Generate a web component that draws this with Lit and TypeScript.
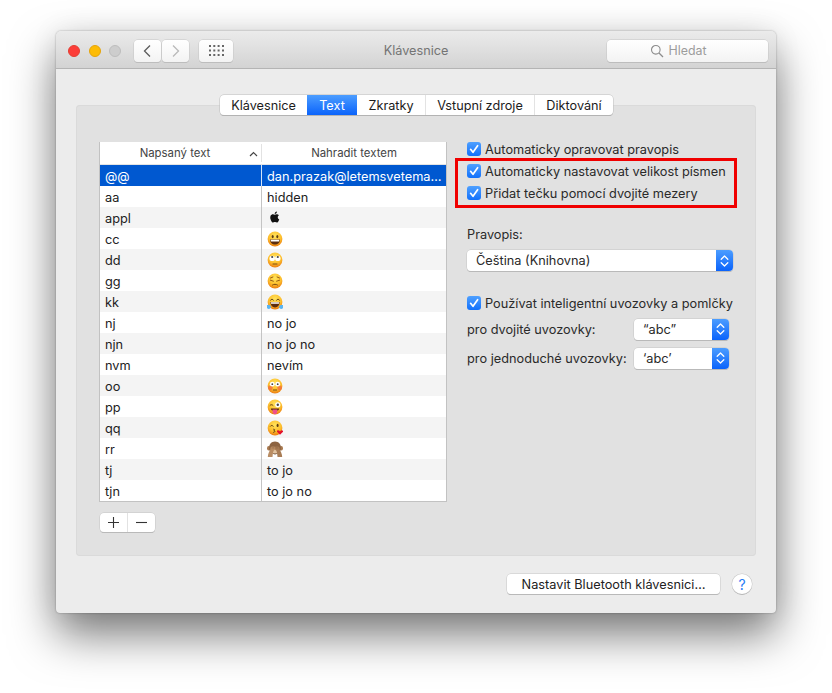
import { LitElement, html, css, svg } from "lit";
import { customElement } from "lit/decorators.js";

const APPLE = "M12.152 6.896c-.948 0-2.415-1.078-3.96-1.04-2.04.027-3.91 1.183-4.961 3.014-2.117 3.675-.546 9.103 1.519 12.09 1.013 1.454 2.208 3.09 3.792 3.039 1.52-.065 2.09-.987 3.935-.987 1.831 0 2.35.987 3.96.948 1.637-.026 2.676-1.48 3.676-2.948 1.156-1.688 1.636-3.325 1.662-3.415-.039-.013-3.182-1.221-3.22-4.857-.026-3.04 2.48-4.494 2.597-4.559-1.429-2.09-3.623-2.324-4.39-2.376-2-.156-3.675 1.09-4.61 1.09zM15.53 3.83c.843-1.012 1.4-2.427 1.245-3.83-1.207.052-2.662.805-3.532 1.818-.78.896-1.454 2.338-1.273 3.714 1.338.104 2.715-.688 3.559-1.701";

const head = (id: string) => svg`
  <defs><radialGradient id=${id} cx="50%" cy="30%" r="72%">
    <stop offset="0" stop-color="#ffe45c"/><stop offset=".6" stop-color="#fdbe2c"/><stop offset="1" stop-color="#e9780f"/>
  </radialGradient></defs>
  <circle cx="8" cy="8" r="7.4" fill="url(#${id})"/>`;

const faces: Record<string, unknown> = {
  apple: svg`<path transform="translate(2.2 1.5) scale(.46)" d=${APPLE} fill="#111"/>`,
  smile: svg`${head("a")}<ellipse cx="5.7" cy="5.6" rx="1" ry="1.6" fill="#5b3a12"/><ellipse cx="10.3" cy="5.6" rx="1" ry="1.6" fill="#5b3a12"/><path d="M3 8.6h10c0 3-2.2 5-5 5s-5-2-5-5z" fill="#5b2c0e"/><path d="M3.6 8.8h8.8l-.4 1.8H4z" fill="#fff"/>`,
  eyes: svg`${head("b")}<circle cx="5.2" cy="6.4" r="2.7" fill="#fff"/><circle cx="10.8" cy="6.4" r="2.7" fill="#fff"/><circle cx="5.2" cy="5" r="1.1" fill="#444"/><circle cx="10.8" cy="5" r="1.1" fill="#444"/><path d="M6 12h4" stroke="#7a4a14" stroke-width="1" stroke-linecap="round"/>`,
  sad: svg`${head("c")}<path d="M3.4 7.200l3 1M12.600 7.200l-3 1M3.500 5l2.400-1M12.500 5l-2.400-1" stroke="#8a5012" stroke-width=".9" fill="none" stroke-linecap="round"/><path d="M5.500 12c1.500-1 3.500-1 5 0" stroke="#7a4a14" stroke-width="1" fill="none" stroke-linecap="round"/>`,
  joy: svg`${head("d")}<path d="M3.600 6.200c.8-1.400 2-1.400 2.800 0M9.600 6.200c.8-1.400 2-1.400 2.800 0" stroke="#5b3a12" stroke-width="1" fill="none" stroke-linecap="round"/><path d="M3.400 8h9.200c0 3.200-2 5.400-4.600 5.400S3.400 11.200 3.400 8z" fill="#5b2c0e"/><path d="M3.800 8.200h8.400l-.3 1.600H4.100z" fill="#fff"/><path d="M-.2 11.200c1.400-.6 3.400-.2 4 1.200.5 1.300-.4 2.500-2 2.500S-.9 13.300-.2 11.200zM16.200 11.200c-1.400-.6-3.400-.2-4 1.200-.5 1.300.4 2.500 2 2.500s2.700-1.600 2-3.700z" fill="#58b4f2"/>`,
  flush: svg`${head("e")}<circle cx="3.400" cy="9.800" r="2.400" fill="#f2693f" opacity=".75"/><circle cx="12.600" cy="9.800" r="2.400" fill="#f2693f" opacity=".75"/><circle cx="5.300" cy="6.200" r="2.400" fill="#fff"/><circle cx="10.700" cy="6.200" r="2.400" fill="#fff"/><circle cx="5.300" cy="6.200" r=".9" fill="#444"/><circle cx="10.700" cy="6.200" r=".9" fill="#444"/><path d="M6.400 12h3.200" stroke="#7a4a14" stroke-width="1" stroke-linecap="round"/>`,
  tongue: svg`${head("f")}<path d="M3 6.400c.8-1 2-1 3 0" stroke="#5b3a12" stroke-width="1" fill="none" stroke-linecap="round"/><circle cx="10.800" cy="5.800" r="2.600" fill="#fff"/><circle cx="10.800" cy="5.800" r="1.200" fill="#444"/><path d="M3.800 9.400h8.400c0 1.200-1 2-2 2.200H5.800c-1-.2-2-1-2-2.200z" fill="#5b2c0e"/><path d="M5.600 10.600h4.600v2.400c0 1.200-1 2.200-2.300 2.200s-2.300-1-2.300-2.200z" fill="#ef4f8a"/>`,
  kiss: svg`${head("g")}<path d="M3.400 6.200c.7-1 1.900-1 2.800 0" stroke="#5b3a12" stroke-width="1" fill="none" stroke-linecap="round"/><ellipse cx="10.600" cy="5.400" rx="1" ry="1.600" fill="#5b3a12"/><path d="M6.600 9.200c1.600 0 1.600 1.300.2 1.500 1.500.2 1.400 1.600-.2 1.700" stroke="#5b3a12" stroke-width=".9" fill="none" stroke-linecap="round"/><path d="M13 14.800l-2.800-2.700c-1-1.300.9-2.800 2.200-1.300l.6.600.6-.6c1.300-1.500 3.200 0 2.200 1.300z" fill="#e3112a"/>`,
  monkey: svg`<ellipse cx="1.700" cy="7.200" rx="1.700" ry="2.300" fill="#a8794f"/><ellipse cx="14.300" cy="7.200" rx="1.700" ry="2.300" fill="#a8794f"/><path d="M8 .6c3.700 0 5.900 2.800 5.900 6.200 0 4.200-2.500 6.400-5.900 6.400S2.100 11 2.100 6.800C2.100 3.400 4.300.6 8 .6z" fill="#8d6442"/><ellipse cx="8" cy="10.400" rx="3.600" ry="2.600" fill="#e2c3a0"/><path d="M3.400 7.200c0-1 1-1.600 2.200-1.600h1.500c.7 0 1 .6 1 1.200v1.100c-.1.900-.8 1-1.300 1.600-.5.700-.9 2.500-1.100 4.500l-.2 1.900H.8c.1-3 1.500-5.600 2.600-7.700z" fill="#b98d64"/><path d="M12.600 7.200c0-1-1-1.600-2.200-1.600H8.900c-.7 0-1 .6-1 1.200v1.100c.1.900.8 1 1.300 1.600.5.700.9 2.500 1.100 4.500l.2 1.900h4.700c-.1-3-1.500-5.600-2.600-7.700z" fill="#a87c55"/><path d="M6.200 12.500c1.200.5 2.400.5 3.600 0" stroke="#5a3a22" stroke-width=".7" fill="none"/><path d="M5.200 5.700v2M6.700 5.700v2M9.300 5.700v2M10.800 5.700v2" stroke="#8a6240" stroke-width=".5"/>`,
};

const rows: [string, string, string?][] = [
  ["@@", "dan.prazak@letemsvetema…"],
  ["aa", "hidden"],
  ["appl", "", "apple"],
  ["cc", "", "smile"],
  ["dd", "", "eyes"],
  ["gg", "", "sad"],
  ["kk", "", "joy"],
  ["nj", "no jo"],
  ["njn", "no jo no"],
  ["nvm", "nevím"],
  ["oo", "", "flush"],
  ["pp", "", "tongue"],
  ["qq", "", "kiss"],
  ["rr", "", "monkey"],
  ["tj", "to jo"],
  ["tjn", "to jo no"],
];

const check = html`<span class="cb"><svg width="14" height="14" viewBox="0 0 14 14"><path d="M3.600 7.300l2.400 3 4.600-6.600" fill="none" stroke="#fff" stroke-width="1.700" stroke-linecap="round" stroke-linejoin="round"/></svg></span>`;

const stepper = html`<span class="step"><svg width="9" height="14" viewBox="0 0 9 14"><path d="M1.200 5.200L4.500 2l3.300 3.200M1.200 8.800L4.500 12l3.300-3.200" fill="none" stroke="#fff" stroke-width="1.300" stroke-linecap="round" stroke-linejoin="round"/></svg></span>`;

@customElement("app-root")
export class AppRoot extends LitElement {
  static styles = css`
    :host { display: block; width: 832px; height: 693px; overflow: hidden; background: #fff; box-sizing: border-box; padding: 31px 56px 0; font-family: Inter, "Liberation Sans", sans-serif; font-size: 12.75px; color: #2a2a2a; }
    * { box-sizing: border-box; }
    .win { width: 720px; height: 582px; border-radius: 5px 5px 4px 4px; background: #ececec; box-shadow: 0 0 2px rgba(0,0,0,.35), 0 22px 45px rgba(0,0,0,.52), 0 0 30px rgba(0,0,0,.07); display: flex; flex-direction: column; }
    .bar { height: 38px; flex: none; border-radius: 5px 5px 0 0; background: linear-gradient(#ebebeb, #d3d3d3); border-bottom: 1px solid #b4b4b4; display: flex; align-items: center; padding: 2px 8px 0 12px; }
    .light { width: 12px; height: 12px; border-radius: 50%; margin-right: 8.5px; flex: none; }
    .red { background: #fc3d39; border: 1px solid #e33e32; }
    .yel { background: #fdbc06; border: 1px solid #e5a40b; }
    .gry { background: #cdcdcd; border: 1px solid #bdbdbd; margin-right: 13px; }
    .tb { height: 22px; background: linear-gradient(#fff, #f3f3f3); border-radius: 4px; box-shadow: 0 0 0 .5px #c6c6c6, 0 1px 0 #b5b5b5; display: flex; align-items: center; justify-content: center; flex: none; }
    .nav { width: 27px; margin-right: 1px; }
    .grid { width: 34px; margin-left: 9px; }
    .title { flex: 1; text-align: center; color: #747474; font-size: 12.7px; padding-right: 8px; }
    .search { width: 161px; gap: 4px; color: #9c9c9c; font-size: 12.4px; padding-right: 18px; }
    .body { flex: 1; display: flex; flex-direction: column; padding: 26px 20px 0; }
    .tabs { display: grid; grid-template-columns: 87px 50px 68px 109px 79px; width: 393px; height: 20px; margin: 0 0 -10px 144px; position: relative; background: #fff; border-radius: 4px; box-shadow: 0 0 0 .5px #bdbdbd, 0 1px 0 #a9a9a9; font-size: 12.7px; color: #1c1c1c; overflow: hidden; }
    .tabs span { display: flex; align-items: center; justify-content: center; border-left: 1px solid #e3e3e3; }
    .tabs span:first-child { border-left: 0; }
    .tabs .on { background: linear-gradient(#4c9dff, #0a63fb); color: #fff; border-left: 0; }
    .tabs .on + span { border-left: 0; }
    .panel { height: 451px; flex: none; background: #e1e1e1; border-radius: 4px; box-shadow: inset 0 0 0 1px #dadada; padding: 37px 20px 0 23px; display: flex; gap: 20px; }
    .left { width: 348px; flex: none; }
    .table { width: 348px; border: 1px solid #c2c2c2; border-top: 0; background: #fff; }
    .hdr { height: 23px; display: grid; grid-template-columns: 162px 1fr; font-size: 11.4px; color: #444; border-bottom: 1px solid #e4e4e4; }
    .hdr span { display: flex; align-items: center; justify-content: center; position: relative; border-right: 1px solid #e2e2e2; margin: 2px 0; }
    .hdr span:first-child { padding-right: 11px; }
    .hdr span:last-child { border-right: 0; }
    .sort { position: absolute; right: 3px; top: 7px; }
    .row { height: 21px; display: grid; grid-template-columns: 162px 1fr; align-items: stretch; color: #222; }
    .row:nth-child(odd) { background: #f4f4f4; }
    .row:nth-child(even) { background: #fff; }
    .row > span { display: flex; align-items: center; padding: 1px 0 0 5px; }
    .row > span:first-child { border-right: 1px solid #c4c4c4; }
    .row.sel { background: #0058d0; color: #fff; }
    .row.sel > span:first-child { border-right-color: #d5e4f7; }
    .pm { width: 55px; height: 19px; margin: 11px 0 0 1px; display: grid; grid-template-columns: 1fr 1fr; background: #fff; border-radius: 4px; box-shadow: 0 0 0 .5px #c6c6c6, 0 1px 0 #adadad; }
    .pm span { display: flex; align-items: center; justify-content: center; }
    .pm span:first-child { border-right: 1px solid #e2e2e2; }
    .right { width: 266px; flex: none; display: flex; flex-direction: column; padding-top: 33px; margin-top: -37px; }
    .chk { height: 22px; display: flex; align-items: center; gap: 4px; white-space: nowrap; flex: none; }
    .cb { width: 14px; height: 14px; border-radius: 3px; background: linear-gradient(#4fa0ff, #1170fb); display: block; flex: none; }
    .cb svg { display: block; }
    .mark { width: 282px; height: 50px; margin: -2px 0 0 -12px; border: 3px solid #f00000; padding: 0 0 0 9px; display: flex; flex-direction: column; }
    .mark .chk:first-child { margin-top: -1px; }
    .lbl { margin-top: 15px; height: 22px; display: flex; align-items: center; }
    .sel-box { height: 21px; background: #fff; border-radius: 4px; box-shadow: 0 0 0 .5px #c6c6c6, 0 1px 0 #adadad; display: flex; align-items: center; justify-content: space-between; padding-left: 9px; overflow: hidden; }
    .step { width: 17px; align-self: stretch; background: linear-gradient(#4c9dff, #0a63fb); display: flex; align-items: center; justify-content: center; }
    .wide { margin-top: 5px; }
    .chk.gap { margin-top: 21px; }
    .q { display: grid; grid-template-columns: 167px 95px; align-items: center; height: 22px; margin-top: 4px; }
    .q + .q { margin-top: 7px; }
    .foot { display: flex; justify-content: flex-end; align-items: center; margin-top: 18px; padding-right: 4px; gap: 12px; }
    .btn { width: 213px; height: 20px; background: #fff; border-radius: 4px; box-shadow: 0 0 0 .5px #c6c6c6, 0 1px 0 #adadad; display: flex; align-items: center; justify-content: center; color: #222; }
    .help { width: 20px; height: 20px; border-radius: 50%; background: #fff; box-shadow: 0 0 0 .5px #c6c6c6, 0 1px 0 #adadad; display: flex; align-items: center; justify-content: center; color: #1f7cf6; font-size: 14px; font-weight: 400; }
  `;

  render() {
    return html`<div class="win">
      <div class="bar">
        <span class="light red"></span><span class="light yel"></span><span class="light gry"></span>
        <span class="tb nav"><svg width="11" height="14" viewBox="0 0 11 14"><path d="M8 1.500L2.500 7 8 12.500" fill="none" stroke="#5c5c5c" stroke-width="1.300"/></svg></span>
        <span class="tb nav"><svg width="11" height="14" viewBox="0 0 11 14"><path d="M3 1.500L8.500 7 3 12.500" fill="none" stroke="#b9b9b9" stroke-width="1.300"/></svg></span>
        <span class="tb grid"><svg width="15" height="11" viewBox="0 0 15 11" fill="#666"><rect x="0" y="0" width="2" height="2"/><rect x="4.300" y="0" width="2" height="2"/><rect x="8.600" y="0" width="2" height="2"/><rect x="13" y="0" width="2" height="2"/><rect x="0" y="4.500" width="2" height="2"/><rect x="4.300" y="4.500" width="2" height="2"/><rect x="8.600" y="4.500" width="2" height="2"/><rect x="13" y="4.500" width="2" height="2"/><rect x="0" y="9" width="2" height="2"/><rect x="4.300" y="9" width="2" height="2"/><rect x="8.600" y="9" width="2" height="2"/><rect x="13" y="9" width="2" height="2"/></svg></span>
        <span class="title">Klávesnice</span>
        <span class="tb search"><svg width="14" height="14" viewBox="0 0 14 14"><circle cx="5.800" cy="5.800" r="4.300" fill="none" stroke="#8c8c8c" stroke-width="1.100"/><path d="M9 9l4 4" stroke="#8c8c8c" stroke-width="1.200"/></svg>Hledat</span>
      </div>
      <div class="body">
        <div class="tabs"><span>Klávesnice</span><span class="on">Text</span><span>Zkratky</span><span>Vstupní zdroje</span><span>Diktování</span></div>
        <div class="panel">
          <div class="left">
            <div class="table">
              <div class="hdr"><span>Napsaný text<svg class="sort" width="9" height="6" viewBox="0 0 9 6"><path d="M1 5l3.500-3.500L8 5" fill="none" stroke="#444" stroke-width="1.200"/></svg></span><span>Nahradit textem</span></div>
              <div class="rows">
                ${rows.map((r, i) => html`<div class="row ${i === 0 ? "sel" : ""}"><span>${r[0]}</span><span>${r[2] ? html`<svg width="16" height="16" viewBox="0 0 16 16">${faces[r[2]]}</svg>` : r[1]}</span></div>`)}
              </div>
            </div>
            <div class="pm"><span><svg width="13" height="13" viewBox="0 0 13 13"><path d="M6.500 1v11M1 6.500h11" stroke="#333" stroke-width="1.100"/></svg></span><span><svg width="13" height="13" viewBox="0 0 13 13"><path d="M1 6.500h11" stroke="#333" stroke-width="1.100"/></svg></span></div>
          </div>
          <div class="right">
            <div class="chk">${check}Automaticky opravovat pravopis</div>
            <div class="mark">
              <div class="chk">${check}Automaticky nastavovat velikost písmen</div>
              <div class="chk">${check}Přidat tečku pomocí dvojité mezery</div>
            </div>
            <div class="lbl">Pravopis:</div>
            <div class="sel-box wide"><span>Čeština (Knihovna)</span>${stepper}</div>
            <div class="chk gap">${check}Používat inteligentní uvozovky a pomlčky</div>
            <div class="q"><span>pro dvojité uvozovky:</span><div class="sel-box"><span>“abc”</span>${stepper}</div></div>
            <div class="q"><span>pro jednoduché uvozovky:</span><div class="sel-box"><span>‘abc’</span>${stepper}</div></div>
          </div>
        </div>
        <div class="foot"><span class="btn">Nastavit Bluetooth klávesnici…</span><span class="help">?</span></div>
      </div>
    </div>`;
  }
}
